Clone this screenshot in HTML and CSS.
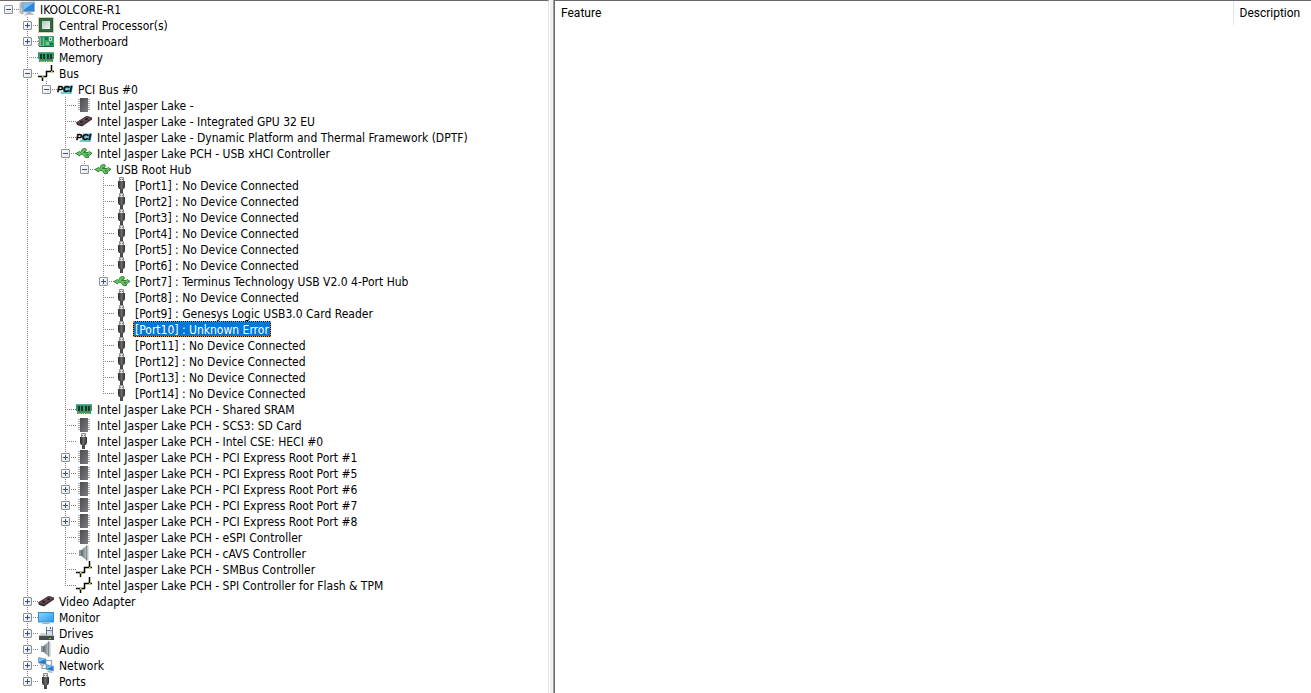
FILE: index.html
```
<!DOCTYPE html>
<html lang="en">
<head>
<meta charset="utf-8">
<title>IKOOLCORE-R1</title>
<link rel="stylesheet" href="styles.css">
</head>
<body>
<svg class="sprite" aria-hidden="true">
  <defs>
    <linearGradient id="g-screen" x1="0" y1="0" x2="1" y2="1"><stop offset="0" stop-color="#8fd3ff"/><stop offset="1" stop-color="#1f9bf0"/></linearGradient>
    <linearGradient id="g-chip" x1="0" y1="0" x2="1" y2="1"><stop offset="0" stop-color="#4c4d50"/><stop offset="1" stop-color="#7b7c7f"/></linearGradient>
    <linearGradient id="g-cone" x1="0" y1="0" x2="1" y2="0"><stop offset="0" stop-color="#5b646a"/><stop offset="1" stop-color="#b4bcc2"/></linearGradient>
    <linearGradient id="g-plug" x1="0" y1="0" x2="1" y2="0"><stop offset="0" stop-color="#2c2c2c"/><stop offset=".5" stop-color="#6a6a6a"/><stop offset="1" stop-color="#303030"/></linearGradient>
    <linearGradient id="g-die" x1="0" y1="0" x2="1" y2="1"><stop offset="0" stop-color="#b9c4bd"/><stop offset="1" stop-color="#f4f6f4"/></linearGradient>
  </defs>
  <symbol id="i-computer" viewBox="0 0 16 16">
    <path d="M1 2l3-1v12l-3-1z" fill="#c9cdd1" stroke="#8c9196" stroke-width=".6"/>
    <path d="M2 4h1M2 6h1" stroke="#74797e" stroke-width=".8"/>
    <path d="M4 1.500L15.500 1v9.500L4 11z" fill="#dfe8ef" stroke="#5f87aa" stroke-width=".6"/>
    <path d="M4.500 2L15 1.500v8.700L4.500 10.500z" fill="#2f86d6"/>
    <path d="M4.500 2L15 1.500 4.500 9z" fill="#7fbdf0"/>
    <path d="M8 11l4-.3.500 2H8z" fill="#a4adb5"/>
    <path d="M5.500 14l2-1.500h6l1 1z" fill="#d0d5d9" stroke="#969da3" stroke-width=".5"/>
  </symbol>
  <symbol id="i-cpu" viewBox="0 0 16 16">
    <rect x=".5" y=".5" width="15" height="15" fill="none" stroke="#b9a65c" stroke-dasharray="1 1"/>
    <rect x="1" y="1" width="14" height="14" fill="#255c36"/>
    <rect x="2" y="2" width="12" height="12" fill="#2f6b41"/>
    <rect x="4" y="4" width="8" height="8" fill="url(#g-die)"/>
  </symbol>
  <symbol id="i-board" viewBox="0 0 16 16">
    <path d="M1 3h15v11H1z" fill="#38a568"/>
    <path d="M1 13h15v1H1z" fill="#17693a"/>
    <path d="M0 3h2v3H0zM0 7h2v2H0zM0 10h2v3H0z" fill="#8d9d96"/>
    <path d="M3 5v8M5 5v8" stroke="#a6d9b8" stroke-width="1"/>
    <path d="M4 5v7" stroke="#166337" stroke-width="1"/>
    <path d="M7 4h3v3H7z" fill="#1f7345"/>
    <path d="M11 4h3v4h-3z" fill="#c9d8cf"/>
    <path d="M12 5h1v2h-1z" fill="#4b7b60"/>
    <path d="M8 9h3v3H8z" fill="#79c697"/>
    <path d="M12 10h3v2h-3z" fill="#1c6a41"/>
  </symbol>
  <symbol id="i-memory" viewBox="0 0 16 16">
    <path d="M0 3h16v7h-1v3H9v-1H8v1H1v-3H0z" fill="#349a6d"/>
    <path d="M0 3h16v1H0z" fill="#56b388"/>
    <path d="M2 5h2v5H2zM5 5h2v5H5zM9 5h2v5H9zM12 5h2v5h-2z" fill="#1b3329"/>
    <path d="M2 12h5v1H2zM10 12h4v1h-4z" fill="#e8923d"/>
  </symbol>
  <symbol id="i-bus" viewBox="0 0 16 16">
    <path d="M0 11.500h8.500v-5H16M4.500 11v5M13.500 0v7" fill="none" stroke="#000" stroke-width="1.500"/>
    <path d="M4 11h1.500v1.500H4zM13 6h1.500v1.500H13z" fill="#fff200"/>
  </symbol>
  <symbol id="i-chip" viewBox="0 0 16 16">
    <path d="M2 2.500h12M2 4.500h12M2 6.500h12M2 8.500h12M2 10.500h12M2 12.500h12" stroke="#a7a7a9" stroke-width="1"/>
    <rect x="4" y="1" width="8" height="14" fill="url(#g-chip)"/>
  </symbol>
  <symbol id="i-gpu" viewBox="0 0 16 16">
    <path d="M0 9.500L10.500 3 16 4.500v2L6 13.500 1 12z" fill="#373235"/>
    <path d="M0 9.500L10.500 3 16 4.500 5.500 11z" fill="#514a4e"/>
    <path d="M2.500 10L11 4.700M5.500 11L14.500 5.300" stroke="#a63e46" stroke-width=".8"/>
    <ellipse cx="5.500" cy="8.700" rx="1.500" ry="1" fill="#211d20"/>
    <ellipse cx="10.500" cy="5.900" rx="1.500" ry="1" fill="#211d20"/>
  </symbol>
  <symbol id="i-usb" viewBox="0 0 16 16">
    <path d="M0 8.500L3.500 6.500l1 1L6.500 4 9.500 3.500l1 1.500-1 1.500H8L7.500 7.500h4.500L13 6.500l3 1.800-2.500 2-1.500-1h-2l.5 1.200 2 .3v1.700l-3 .2L7 9.300H4.500L3.500 11z" fill="#66c860" stroke="#28742d" stroke-width=".9" stroke-linejoin="round"/>
  </symbol>
  <symbol id="i-plug" viewBox="0 0 16 16">
    <path d="M5.500 .5h4v4h-4z" fill="#e2e2e2" stroke="#8e8e8e"/>
    <path d="M6 2h1v1H6zM8 2h1v1H8z" fill="#777"/>
    <path d="M4 4h7v6L10 12H5L4 10z" fill="url(#g-plug)"/>
    <path d="M6 12h3v4H6z" fill="#4b4b4b"/>
  </symbol>
  <symbol id="i-speaker" viewBox="0 0 16 16">
    <path d="M3 5h3v6H3z" fill="#8e979d"/>
    <path d="M5 5.500L10 1v14l-5-4.500z" fill="url(#g-cone)"/>
    <path d="M10 .5h2.500v15H10z" fill="#b9c3c9"/>
    <path d="M10 .5h1v15h-1z" fill="#7f8a91"/>
  </symbol>
  <symbol id="i-monitor" viewBox="0 0 16 16">
    <rect x=".5" y="3.500" width="15" height="9.500" fill="url(#g-screen)" stroke="#3f8cc4"/>
    <path d="M7 13h2v1H7z" fill="#b9c4cc"/><path d="M4.500 14h7v1h-7z" fill="#a3adb5"/>
  </symbol>
  <symbol id="i-drive" viewBox="0 0 16 16">
    <path d="M8 2h7v8H8z" fill="#667b96"/><path d="M9 2h5v3H9z" fill="#edf2f6"/><path d="M9 6h5v4H9z" fill="#d4dce5"/><path d="M12 2h1v2h-1z" fill="#52627a"/>
    <path d="M3 8h5v2h8v1H1z" fill="#d0d2d3"/>
    <path d="M1 10h15v5H1z" fill="#484a4b"/><path d="M1 10h15v1H1z" fill="#b4b6b7"/><path d="M11 13h2v1h-2z" fill="#4fe34b"/>
  </symbol>
  <symbol id="i-network" viewBox="0 0 16 16">
    <path d="M8 3.500h5.500V8M4 8v3.500h4" fill="none" stroke="#949da3" stroke-width="1.200"/>
    <path d="M.5 .5L8 2v5.500L.5 6z" fill="#1f7fd2" stroke="#7f9db6" stroke-width=".6"/><path d="M1 1l6.500 1.300L1 5z" fill="#74bdf8"/>
    <path d="M2 7.500l4 .8" stroke="#a4adb3" stroke-width="1.200"/>
    <path d="M8 7.500L15.500 9v5L8 12.500z" fill="#1f7fd2" stroke="#7f9db6" stroke-width=".6"/><path d="M8.500 8l6.500 1.300L8.500 12z" fill="#74bdf8"/>
    <path d="M9.500 14.300l5 1" stroke="#a4adb3" stroke-width="1.300"/>
  </symbol>
</svg>

<main class="window">
  <nav class="tree-pane" aria-label="Hardware">
    <ul class="tree root">
      <li><div class="row"><button class="toggle" aria-label="Collapse"></button><svg class="icon"><use href="#i-computer"/></svg><span class="label">IKOOLCORE-R1</span></div>
        <ul class="tree">
          <li><div class="row"><button class="toggle plus" aria-label="Expand"></button><svg class="icon"><use href="#i-cpu"/></svg><span class="label">Central Processor(s)</span></div></li>
          <li><div class="row"><button class="toggle plus" aria-label="Expand"></button><svg class="icon"><use href="#i-board"/></svg><span class="label">Motherboard</span></div></li>
          <li><div class="row"><svg class="icon"><use href="#i-memory"/></svg><span class="label">Memory</span></div></li>
          <li><div class="row"><button class="toggle" aria-label="Collapse"></button><svg class="icon"><use href="#i-bus"/></svg><span class="label">Bus</span></div>
            <ul class="tree">
              <li><div class="row"><button class="toggle" aria-label="Collapse"></button><svg class="icon" viewBox="0 0 16 16"><path d="M7 4.500h9L14.500 13H3.500l.6-2.500H6z" fill="#73cdd0"/><text x="0" y="11" class="pci-mark">PCI</text></svg><span class="label">PCI Bus #0</span></div>
                <ul class="tree">
                  <li><div class="row"><svg class="icon"><use href="#i-chip"/></svg><span class="label">Intel Jasper Lake -</span></div></li>
                  <li><div class="row"><svg class="icon"><use href="#i-gpu"/></svg><span class="label">Intel Jasper Lake - Integrated GPU 32 EU</span></div></li>
                  <li><div class="row"><svg class="icon" viewBox="0 0 16 16"><path d="M7 4.500h9L14.500 13H3.500l.6-2.500H6z" fill="#73cdd0"/><text x="0" y="11" class="pci-mark">PCI</text></svg><span class="label">Intel Jasper Lake - Dynamic Platform and Thermal Framework (DPTF)</span></div></li>
                  <li><div class="row"><button class="toggle" aria-label="Collapse"></button><svg class="icon"><use href="#i-usb"/></svg><span class="label">Intel Jasper Lake PCH - USB xHCI Controller</span></div>
                    <ul class="tree">
                      <li><div class="row"><button class="toggle" aria-label="Collapse"></button><svg class="icon"><use href="#i-usb"/></svg><span class="label">USB Root Hub</span></div>
                        <ul class="tree">
                          <li><div class="row"><svg class="icon"><use href="#i-plug"/></svg><span class="label">[Port1] : No Device Connected</span></div></li>
                          <li><div class="row"><svg class="icon"><use href="#i-plug"/></svg><span class="label">[Port2] : No Device Connected</span></div></li>
                          <li><div class="row"><svg class="icon"><use href="#i-plug"/></svg><span class="label">[Port3] : No Device Connected</span></div></li>
                          <li><div class="row"><svg class="icon"><use href="#i-plug"/></svg><span class="label">[Port4] : No Device Connected</span></div></li>
                          <li><div class="row"><svg class="icon"><use href="#i-plug"/></svg><span class="label">[Port5] : No Device Connected</span></div></li>
                          <li><div class="row"><svg class="icon"><use href="#i-plug"/></svg><span class="label">[Port6] : No Device Connected</span></div></li>
                          <li><div class="row"><button class="toggle plus" aria-label="Expand"></button><svg class="icon"><use href="#i-usb"/></svg><span class="label">[Port7] : Terminus Technology USB V2.0 4-Port Hub</span></div></li>
                          <li><div class="row"><svg class="icon"><use href="#i-plug"/></svg><span class="label">[Port8] : No Device Connected</span></div></li>
                          <li><div class="row"><svg class="icon"><use href="#i-plug"/></svg><span class="label">[Port9] : Genesys Logic USB3.0 Card Reader</span></div></li>
                          <li><div class="row"><svg class="icon"><use href="#i-plug"/></svg><span class="label selected">[Port10] : Unknown Error</span></div></li>
                          <li><div class="row"><svg class="icon"><use href="#i-plug"/></svg><span class="label">[Port11] : No Device Connected</span></div></li>
                          <li><div class="row"><svg class="icon"><use href="#i-plug"/></svg><span class="label">[Port12] : No Device Connected</span></div></li>
                          <li><div class="row"><svg class="icon"><use href="#i-plug"/></svg><span class="label">[Port13] : No Device Connected</span></div></li>
                          <li><div class="row"><svg class="icon"><use href="#i-plug"/></svg><span class="label">[Port14] : No Device Connected</span></div></li>
                        </ul>
                      </li>
                    </ul>
                  </li>
                  <li><div class="row"><svg class="icon"><use href="#i-memory"/></svg><span class="label">Intel Jasper Lake PCH - Shared SRAM</span></div></li>
                  <li><div class="row"><svg class="icon"><use href="#i-chip"/></svg><span class="label">Intel Jasper Lake PCH - SCS3: SD Card</span></div></li>
                  <li><div class="row"><svg class="icon"><use href="#i-plug"/></svg><span class="label">Intel Jasper Lake PCH - Intel CSE: HECI #0</span></div></li>
                  <li><div class="row"><button class="toggle plus" aria-label="Expand"></button><svg class="icon"><use href="#i-chip"/></svg><span class="label">Intel Jasper Lake PCH - PCI Express Root Port #1</span></div></li>
                  <li><div class="row"><button class="toggle plus" aria-label="Expand"></button><svg class="icon"><use href="#i-chip"/></svg><span class="label">Intel Jasper Lake PCH - PCI Express Root Port #5</span></div></li>
                  <li><div class="row"><button class="toggle plus" aria-label="Expand"></button><svg class="icon"><use href="#i-chip"/></svg><span class="label">Intel Jasper Lake PCH - PCI Express Root Port #6</span></div></li>
                  <li><div class="row"><button class="toggle plus" aria-label="Expand"></button><svg class="icon"><use href="#i-chip"/></svg><span class="label">Intel Jasper Lake PCH - PCI Express Root Port #7</span></div></li>
                  <li><div class="row"><button class="toggle plus" aria-label="Expand"></button><svg class="icon"><use href="#i-chip"/></svg><span class="label">Intel Jasper Lake PCH - PCI Express Root Port #8</span></div></li>
                  <li><div class="row"><svg class="icon"><use href="#i-chip"/></svg><span class="label">Intel Jasper Lake PCH - eSPI Controller</span></div></li>
                  <li><div class="row"><svg class="icon"><use href="#i-speaker"/></svg><span class="label">Intel Jasper Lake PCH - cAVS Controller</span></div></li>
                  <li><div class="row"><svg class="icon"><use href="#i-bus"/></svg><span class="label">Intel Jasper Lake PCH - SMBus Controller</span></div></li>
                  <li><div class="row"><svg class="icon"><use href="#i-bus"/></svg><span class="label">Intel Jasper Lake PCH - SPI Controller for Flash &amp; TPM</span></div></li>
                </ul>
              </li>
            </ul>
          </li>
          <li><div class="row"><button class="toggle plus" aria-label="Expand"></button><svg class="icon"><use href="#i-gpu"/></svg><span class="label">Video Adapter</span></div></li>
          <li><div class="row"><button class="toggle plus" aria-label="Expand"></button><svg class="icon"><use href="#i-monitor"/></svg><span class="label">Monitor</span></div></li>
          <li><div class="row"><button class="toggle plus" aria-label="Expand"></button><svg class="icon"><use href="#i-drive"/></svg><span class="label">Drives</span></div></li>
          <li><div class="row"><button class="toggle plus" aria-label="Expand"></button><svg class="icon"><use href="#i-speaker"/></svg><span class="label">Audio</span></div></li>
          <li><div class="row"><button class="toggle plus" aria-label="Expand"></button><svg class="icon"><use href="#i-network"/></svg><span class="label">Network</span></div></li>
          <li><div class="row"><button class="toggle plus" aria-label="Expand"></button><svg class="icon"><use href="#i-plug"/></svg><span class="label">Ports</span></div></li>
        </ul>
      </li>
    </ul>
  </nav>
  <div class="splitter"></div>
  <section class="detail-pane">
    <table class="features">
      <thead><tr><th scope="col">Feature</th><th scope="col" class="description">Description</th></tr></thead>
    </table>
  </section>
</main>
</body>
</html>
```
FILE: styles.css
```
* { box-sizing: border-box; }

body {
  margin: 0;
  background: #fff;
  color: #000;
  font: 12px/16px "DejaVu Sans Condensed", "Noto Sans", sans-serif;
}

.sprite { display: block; width: 0; height: 0; position: absolute; }
.pci-mark { font: italic bold 9px "Liberation Sans", sans-serif; fill: #000; stroke: #000; stroke-width: .4px; }

.window {
  display: grid;
  grid-template-columns: minmax(0, 549fr) 5px minmax(0, 757fr);
  min-height: 100vh;
}

.tree-pane {
  border-top: 1px solid #696969;
  border-right: 1px solid #e3e3e3;
  overflow: hidden;
}
.splitter { background: #f0f0f0; border-left: 1px solid #fff; }
.detail-pane {
  border-top: 1px solid #696969;
  border-left: 1px solid #696969;
  box-shadow: -1px 0 #a0a0a0;
}

.tree { list-style: none; margin: 0; padding: 0; }
.tree .tree { margin-left: 19px; }

/* dotted connectors */
.tree .tree > li:not(:last-child) {
  background: repeating-linear-gradient(to bottom, #808080 0 1px, transparent 1px 2px) 8px 0 / 1px 100% no-repeat;
}
.row {
  display: flex;
  height: 16px;
  padding-left: 19px;
  background: repeating-linear-gradient(to right, #808080 0 1px, transparent 1px 2px) 8px 8px / 11px 1px no-repeat;
}
.tree .tree > li:last-child > .row {
  background:
    repeating-linear-gradient(to right, #808080 0 1px, transparent 1px 2px) 8px 8px / 11px 1px no-repeat,
    repeating-linear-gradient(to bottom, #808080 0 1px, transparent 1px 2px) 8px 0 / 1px 9px no-repeat;
}

.toggle {
  flex: none;
  width: 9px;
  height: 9px;
  margin: 4px 6px 0 -15px;
  padding: 0;
  border: 1px solid #919191;
  border-radius: 1px;
  background:
    linear-gradient(#33508f, #33508f) center / 5px 1px no-repeat,
    linear-gradient(135deg, #fff, #e4e4e4);
}
.toggle.plus {
  background:
    linear-gradient(#33508f, #33508f) center / 5px 1px no-repeat,
    linear-gradient(#33508f, #33508f) center / 1px 5px no-repeat,
    linear-gradient(135deg, #fff, #e4e4e4);
}

.icon { flex: none; width: 16px; height: 16px; margin-right: 3px; }
.label { height: 16px; padding: 1px 2px 0; white-space: nowrap; }
.label.selected {
  padding: 0 1px;
  border: 1px dotted #ff8728;
  color: #fff;
  background:
    linear-gradient(#0078d7, #0078d7) padding-box,
    linear-gradient(#000, #000) border-box;
}

.features { width: 100%; border-collapse: collapse; table-layout: fixed; }
.features th {
  height: 24px;
  padding: 0 6px;
  text-align: left;
  font: 12px/16px Roboto, sans-serif;
}
.features .description { width: 78px; border-left: 1px solid #e5e5e5; }
```
